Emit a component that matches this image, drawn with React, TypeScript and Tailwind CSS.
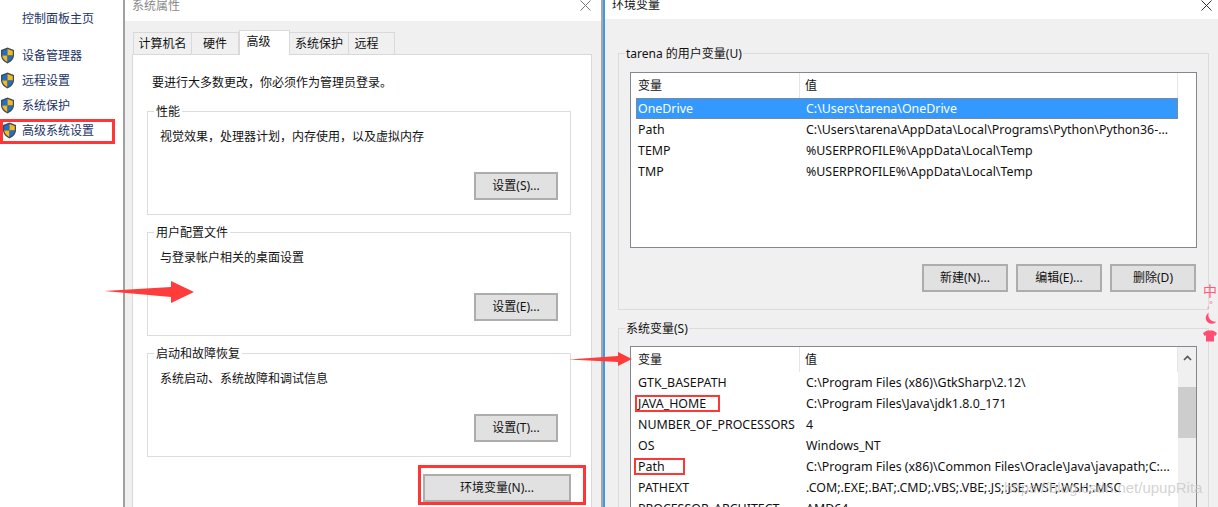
import React from 'react';

const fontStack = '[font-family:"Noto_Sans","Noto_Sans_CJK_SC",sans-serif]';

function Shield({ className }: { className?: string }) {
    return (
        <svg width="15" height="17" viewBox="0 0 15 17" className={`shrink-0 ${className ?? ''}`}>
            <path d="M7.5 0.5 L14 3 V8 C14 12 11 15 7.5 16.5 C4 15 1 12 1 8 V3 Z" fill="#3f4a55" />
            <path d="M7.5 2 V8.5 H2.2 V4 Z" fill="#1f6fc4" />
            <path d="M7.5 2 L12.8 4 V8.5 H7.5 Z" fill="#f5b81f" />
            <path d="M2.2 8.5 H7.5 V15 C5 14 2.6 11.5 2.2 8.5 Z" fill="#f5b81f" />
            <path d="M7.5 8.5 H12.8 C12.4 11.5 10 14 7.5 15 Z" fill="#1f6fc4" />
        </svg>
    );
}

function CloseX({ className, color }: { className: string; color: string }) {
    return (
        <svg width="11" height="11" viewBox="0 0 11 11" className={className}>
            <path d="M0.5 0.5 L10.5 10.5 M10.5 0.5 L0.5 10.5" stroke={color} strokeWidth="1" fill="none" />
        </svg>
    );
}

function WinButton({ label, className }: { label: string; className: string }) {
    return (
        <div className={`flex h-[28px] items-center justify-center border-2 border-[#adadad] bg-[#e1e1e1] text-[12px] text-[#111] ${className}`}>
            {label}
        </div>
    );
}

function SettingsGroup({ title, text, button }: { title: string; text: string; button: string }) {
    return (
        <div className="relative h-[104px] w-[424px] border border-[#dcdcdc] pl-[12px] pt-[16px]">
            <span className="absolute left-[6px] top-[-9px] bg-white px-[2px] text-[12px] leading-[18px] text-[#111]">{title}</span>
            <p className="text-[12px] leading-[18px] text-[#111]">{text}</p>
            <WinButton label={button} className="absolute right-[12px] top-[60px] w-[84px]" />
        </div>
    );
}

const userVars = [
    ['OneDrive', 'C:\\Users\\tarena\\OneDrive'],
    ['Path', 'C:\\Users\\tarena\\AppData\\Local\\Programs\\Python\\Python36-...'],
    ['TEMP', '%USERPROFILE%\\AppData\\Local\\Temp'],
    ['TMP', '%USERPROFILE%\\AppData\\Local\\Temp'],
];

const systemVars = [
    ['GTK_BASEPATH', 'C:\\Program Files (x86)\\GtkSharp\\2.12\\'],
    ['JAVA_HOME', 'C:\\Program Files\\Java\\jdk1.8.0_171'],
    ['NUMBER_OF_PROCESSORS', '4'],
    ['OS', 'Windows_NT'],
    ['Path', 'C:\\Program Files (x86)\\Common Files\\Oracle\\Java\\javapath;C:...'],
    ['PATHEXT', '.COM;.EXE;.BAT;.CMD;.VBS;.VBE;.JS;.JSE;.WSF;.WSH;.MSC'],
    ['PROCESSOR_ARCHITECT', 'AMD64'],
];

function ListHeader() {
    return (
        <div className="flex h-[25px] items-stretch text-[12px] text-[#111]">
            <div className="flex w-[164px] items-center border-r border-[#e5e5e5] pl-[2px]">变量</div>
            <div className="flex flex-1 items-center border-r border-[#e5e5e5] pl-[5px]">值</div>
        </div>
    );
}

function VarRow({ name, value, selected }: { name: string; value: string; selected?: boolean }) {
    return (
        <div className={`flex h-[21px] items-center whitespace-nowrap pt-[2px] text-[12.4px] ${selected ? 'bg-[#3399ff] text-white outline-1 -outline-offset-1 outline-dotted outline-[#c9772f]' : 'text-[#111]'}`}>
            <div className="w-[164px] overflow-hidden pl-[2px]">{name}</div>
            <div className="flex-1 overflow-hidden pl-[6px]">{value}</div>
        </div>
    );
}

export default function App() {
    return (
        <div className={`relative flex h-[507px] w-[1218px] overflow-hidden bg-white ${fontStack}`}>
            {/* sidebar */}
            <div className="w-[125px] shrink-0 border-r-2 border-[#a0a0a0] pt-[10px] text-[12px] text-[#1c3466]">
                <p className="pl-[22px] leading-[18px]">控制面板主页</p>
                <div className="mt-[15px] flex flex-col">
                    {['设备管理器', '远程设置', '系统保护', '高级系统设置'].map((item, i) => (
                        <div key={item} className="flex h-[25px] items-center gap-[7px]">
                            <Shield className={i === 3 ? 'translate-x-[2px]' : ''} />
                            <span className="whitespace-nowrap">{item}</span>
                        </div>
                    ))}
                </div>
            </div>

            {/* 系统属性 */}
            <div className="flex w-[478px] shrink-0 flex-col border-r-2 border-[#a8a8a8]">
                <div className="relative h-[21px] shrink-0 bg-white pl-[7px] text-[12px] leading-[12px] text-[#8a8a8a]">
                    系统属性
                    <CloseX className="absolute right-[10px] top-0" color="#777" />
                </div>
                <div className="flex flex-1 flex-col bg-[#f0f0f0] pl-[7px] pr-[9px]">
                    <div className="flex h-[33px] shrink-0 items-end pl-[1px] text-[12px] text-[#111]">
                        <div className="flex h-[22px] w-[59px] items-center justify-center border border-b-0 border-[#d9d9d9]">计算机名</div>
                        <div className="flex h-[22px] w-[47px] items-center justify-center border border-b-0 border-l-0 border-[#d9d9d9]">硬件</div>
                        <div className="z-10 -mb-px flex h-[25px] w-[51px] items-center justify-center border border-b-0 border-[#d9d9d9] bg-white pb-[2px] pr-[12px]">高级</div>
                        <div className="flex h-[22px] w-[59px] items-center justify-center border border-b-0 border-l-0 border-[#d9d9d9]">系统保护</div>
                        <div className="flex h-[22px] w-[46px] items-center justify-center border border-b-0 border-l-0 border-[#d9d9d9] pr-[10px]">远程</div>
                    </div>
                    <div className="flex-1 border border-b-0 border-[#d9d9d9] bg-white pl-[14px]">
                        <p className="pl-[5px] pt-[19px] text-[12px] leading-[18px] text-[#111]">要进行大多数更改，你必须作为管理员登录。</p>
                        <div className="mt-[19px] flex flex-col gap-[17px]">
                            <SettingsGroup title="性能" text="视觉效果，处理器计划，内存使用，以及虚拟内存" button="设置(S)..." />
                            <SettingsGroup title="用户配置文件" text="与登录帐户相关的桌面设置" button="设置(E)..." />
                            <SettingsGroup title="启动和故障恢复" text="系统启动、系统故障和调试信息" button="设置(T)..." />
                        </div>
                        <div className="mt-[17px] flex w-[424px] justify-end">
                            <WinButton label="环境变量(N)..." className="w-[148px]" />
                        </div>
                    </div>
                </div>
            </div>

            {/* 环境变量 */}
            <div className="flex min-w-0 flex-1 flex-col border-l-2 border-[#3f9ae0]">
                <div className="relative h-[19px] shrink-0 bg-white pl-[7px] text-[12px] leading-[9px] text-[#111]">
                    环境变量
                    <CloseX className="absolute right-[6px] top-0" color="#333" />
                </div>
                <div className="min-h-0 flex-1 bg-[#f0f0f0] pl-[13px] pr-[9px] pt-[34px]">
                    <div className="relative h-[257px] border border-[#dcdcdc] pl-[11px] pt-[18px]">
                        <span className="absolute left-[6px] top-[-9px] bg-[#f0f0f0] px-[1px] text-[12px] leading-[18px] text-[#111]">tarena 的用户变量(U)</span>
                        <div className="h-[176px] w-[567px] border border-[#828790] bg-white pl-[5px] pr-[18px]">
                            <ListHeader />
                            {userVars.map(([name, value], i) => (
                                <VarRow key={name} name={name} value={value} selected={i === 0} />
                            ))}
                        </div>
                        <div className="mt-[16px] flex w-[567px] justify-end gap-[8px] pr-[1px]">
                            <WinButton label="新建(N)..." className="w-[86px]" />
                            <WinButton label="编辑(E)..." className="w-[86px]" />
                            <WinButton label="删除(D)" className="w-[86px]" />
                        </div>
                    </div>
                    <div className="relative mt-[18px] h-[200px] border border-[#dcdcdc] pl-[11px] pt-[17px]">
                        <span className="absolute left-[6px] top-[-9px] bg-[#f0f0f0] px-[1px] text-[12px] leading-[18px] text-[#111]">系统变量(S)</span>
                        <div className="flex h-[200px] w-[567px] border border-[#828790] bg-white pl-[5px]">
                            <div className="min-w-0 flex-1">
                                <ListHeader />
                                {systemVars.map(([name, value]) => (
                                    <VarRow key={name} name={name} value={value} />
                                ))}
                            </div>
                            <div className="flex w-[18px] shrink-0 flex-col items-center bg-[#f0f0f0] pt-[8px]">
                                <svg width="9" height="6" viewBox="0 0 9 6">
                                    <path d="M1 5 L4.5 1.5 L8 5" stroke="#555" strokeWidth="1.6" fill="none" />
                                </svg>
                                <div className="mt-[26px] h-[51px] w-full bg-[#cdcdcd]" />
                            </div>
                        </div>
                    </div>
                </div>
            </div>

            {/* annotations */}
            <div className="absolute left-0 top-[119px] h-[25px] w-[115px] border-[3px] border-[#ff3636]" />
            <div className="absolute left-[418px] top-[465px] h-[40px] w-[168px] border-[3px] border-[#ff3636]" />
            <div className="absolute left-[635px] top-[395px] h-[17px] w-[85px] border-[2px] border-[#ff3636]" />
            <div className="absolute left-[634px] top-[458px] h-[17px] w-[51px] border-[2px] border-[#ff3636]" />
            <svg className="absolute left-[104px] top-[281px]" width="90" height="23" viewBox="0 0 90 23">
                <path d="M0 10 L67 6 V0 L90 11 L67 22 V16 Z" fill="#ff3c3c" />
            </svg>
            <svg className="absolute left-[569px] top-[352px]" width="64" height="15" viewBox="0 0 64 15">
                <path d="M0 7.5 L49 4 V0 L63 7 L49 14 V10 Z" fill="#ff3c3c" />
            </svg>

            {/* tray */}
            <div className="absolute left-[1203px] top-[283px] flex w-[14px] flex-col items-center text-[#ff5a7d]">
                <span className="text-[14px] leading-[16px]">中</span>
                <span className="mt-[2px] text-[8px] leading-[8px]">,°</span>
                <svg width="13" height="13" viewBox="0 0 13 13" className="mt-[3px]">
                    <path d="M5 0.5 A6 6 0 1 0 12.5 9.5 A6.5 6.5 0 0 1 5 0.5 Z" fill="#ff4d73" />
                </svg>
                <svg width="14" height="12" viewBox="0 0 14 12" className="mt-[5px]">
                    <path d="M4 0.5 H10 L14 3 L12.5 6 L11 5.2 V11.5 H3 V5.2 L1.5 6 L0 3 Z" fill="#ff4d73" />
                </svg>
            </div>
            <span className="absolute left-[1004px] top-[479px] whitespace-nowrap text-[15px] leading-[18px] text-[#c8c8c8]/80 [font-family:'Liberation_Sans',sans-serif]">https://blog.csdn.net/upupRita</span>
        </div>
    );
}
